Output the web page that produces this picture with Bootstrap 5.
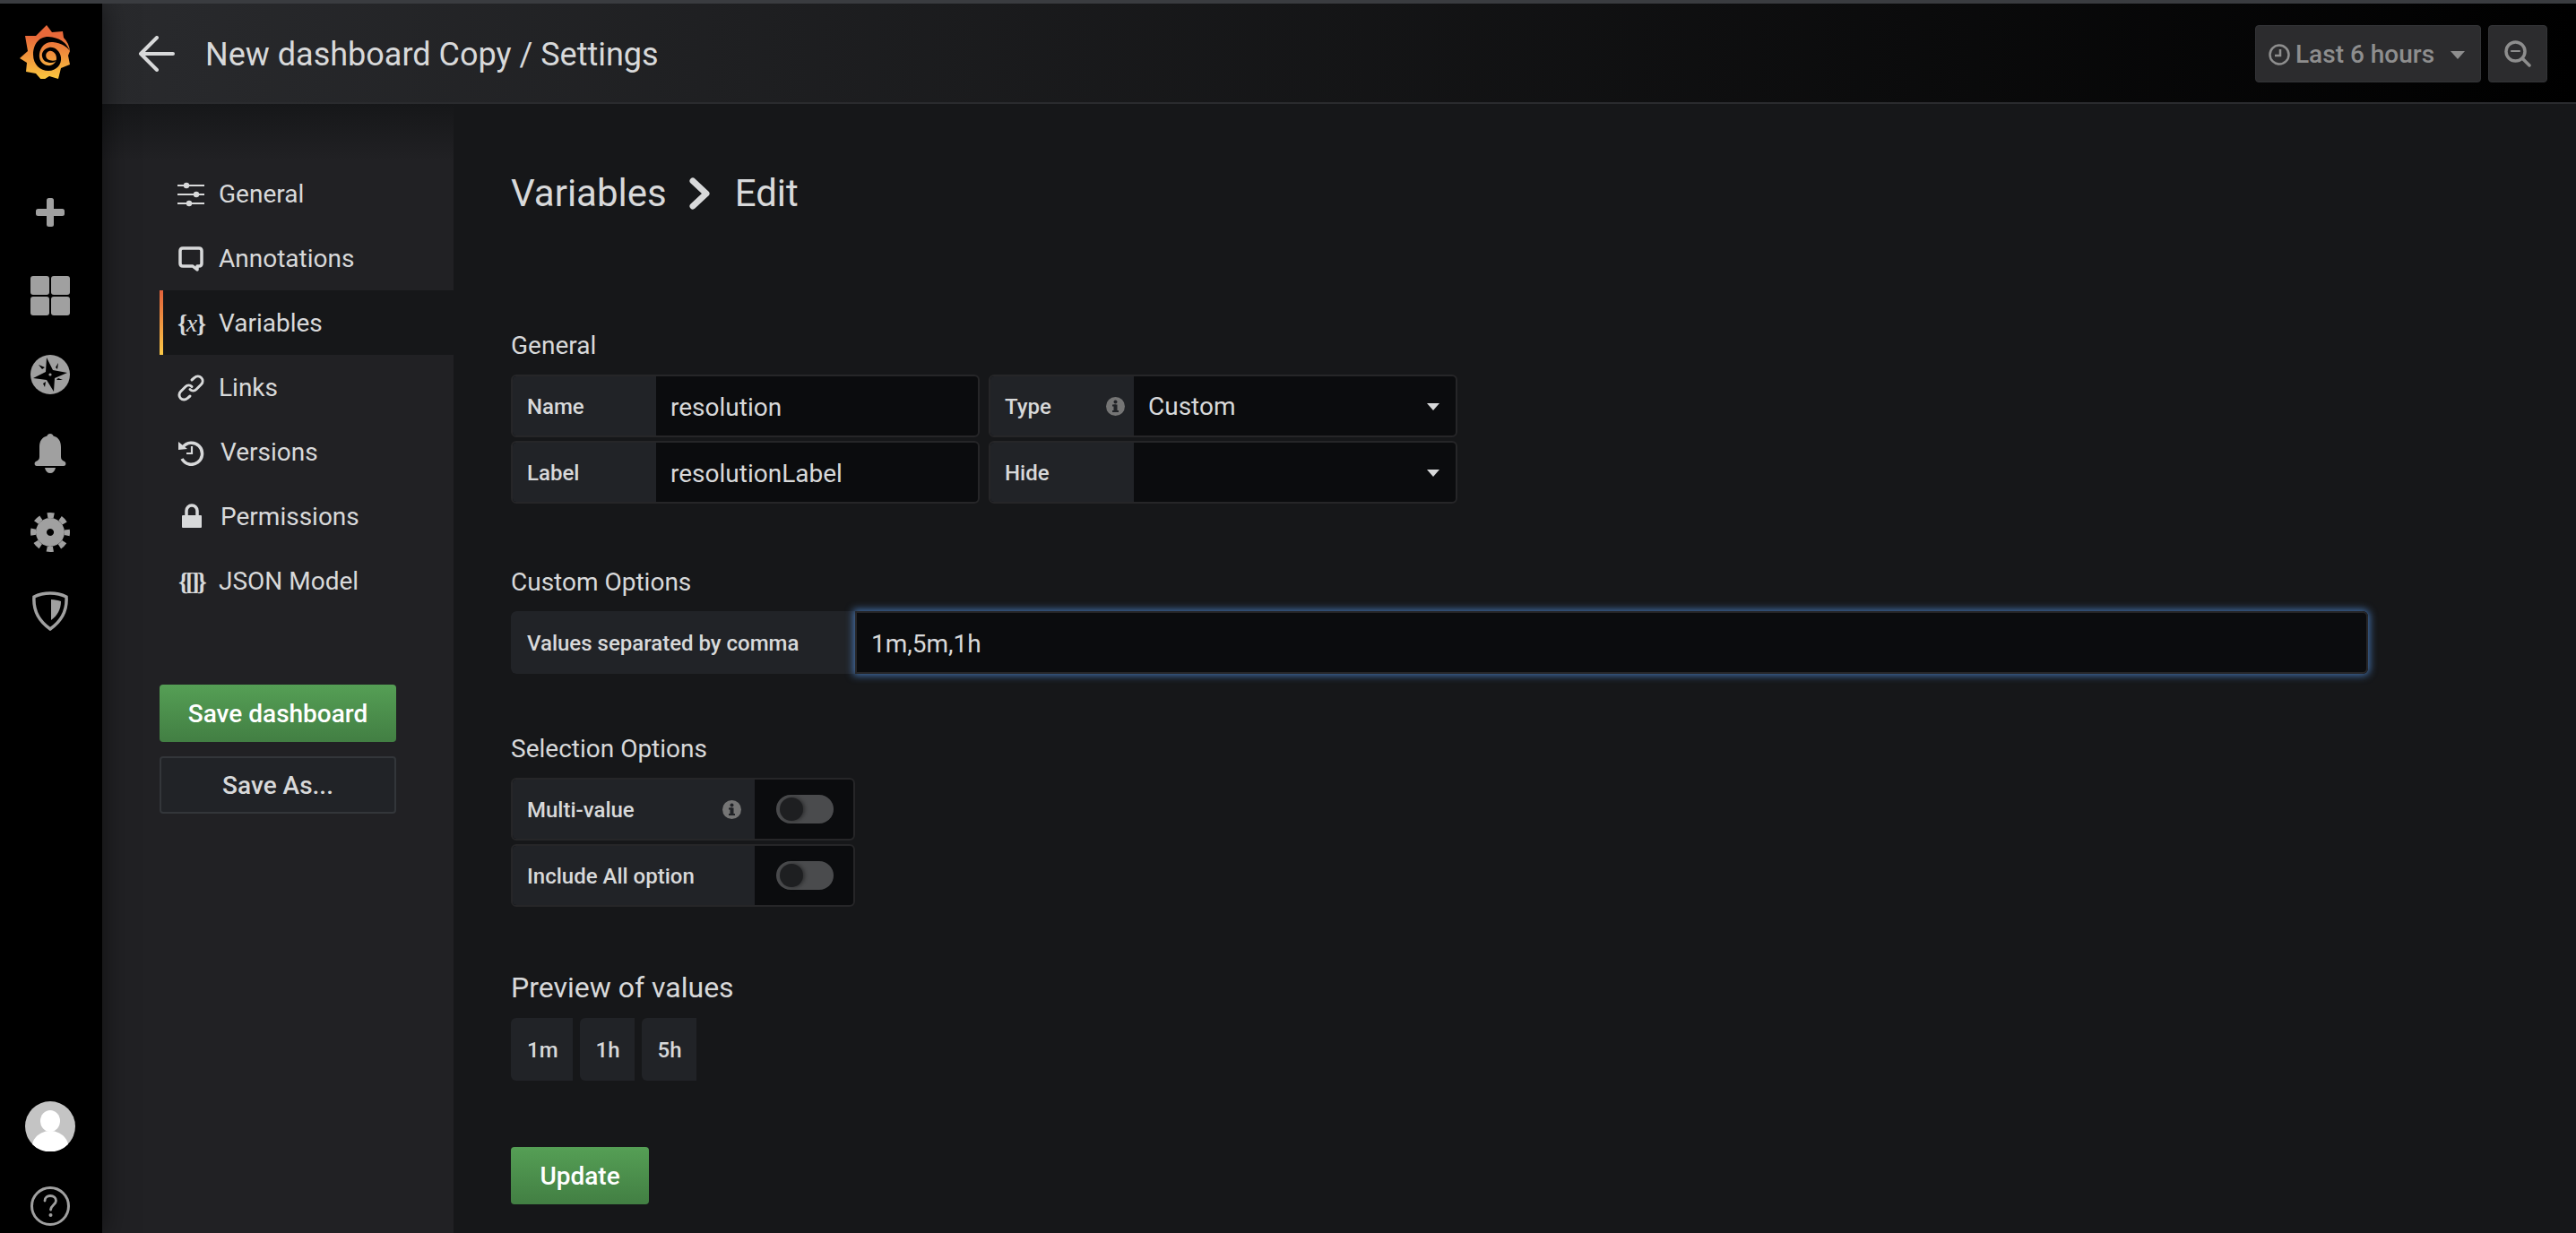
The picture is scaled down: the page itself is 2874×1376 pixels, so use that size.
<!DOCTYPE html>
<html lang="en">

<head>
    <meta charset="UTF-8">
    <meta name="viewport" content="width=device-width, initial-scale=1.0">
    <title>New dashboard Copy / Settings</title>
    <link href="https://cdn.jsdelivr.net/npm/bootstrap@5.3.0/dist/css/bootstrap.min.css" rel="stylesheet">
    <style>
        body {
            background: #161719;
            color: #d8d9da;
            font-family: Roboto, "Liberation Sans", sans-serif;
            font-size: 28px;
            height: 100vh;
            overflow: hidden;
            border-top: 4px solid #3a3c40;
        }

        .gf-shell {
            height: 100%;
        }

        /* black icon rail on the left */
        .gf-rail {
            width: 114px;
            background: #000;
            position: relative;
            z-index: 2;
            box-shadow: 0 0 30px rgba(0, 0, 0, .55);
            padding: 0 2px 8px 0;
        }

        .gf-rail svg {
            display: block;
            fill: #a0a0a0;
        }

        .gf-logo {
            width: 64px;
            height: 64px;
            margin: 20px 0 0 18px;
            align-self: flex-start;
        }

        .gf-rail-icons {
            margin-top: 133px;
            gap: 44px;
        }

        .gf-rail-plus {
            margin-bottom: 11px;
        }

        .gf-rail-foot {
            gap: 39px;
        }

        /* top bar */
        .gf-topbar {
            height: 112px;
            flex: none;
            background: linear-gradient(90deg, #292a2d, #000);
            border-bottom: 2px solid #2a2b2e;
            padding: 2px 32px 0 40px;
        }

        .gf-title {
            font-size: 36px;
            color: #d8d9da;
            margin: 3px 0 0 33px;
            font-weight: 400;
        }

        .gf-timebtn {
            height: 64px;
            background: #2c2c2e;
            border: 1px solid #333437;
            border-radius: 4px;
            color: #8e8e8e;
            font-size: 28px;
            font-weight: 500;
        }

        .gf-timepick {
            width: 252px;
            padding: 2px 14px 0;
            margin-right: 8px;
            gap: 6px;
        }

        .gf-zoomout {
            width: 66px;
            justify-content: center;
        }

        .gf-caret-dim {
            width: 0;
            height: 0;
            border-left: 8px solid transparent;
            border-right: 8px solid transparent;
            border-top: 9px solid #8e8e8e;
            margin-left: 12px;
        }

        /* settings aside */
        .gf-aside {
            width: 392px;
            flex: none;
            padding: 64px 0 0 64px;
            background: linear-gradient(180deg, #161719 0, #212124 64px);
        }

        .gf-menu-link {
            height: 72px;
            color: #d8d9da;
            font-size: 28px;
            padding: 2px 0 0 16px;
            border-left: 4px solid transparent;
        }

        .gf-menu-link:hover {
            color: #d8d9da;
        }

        .gf-menu-link.gf-active {
            background: #161719;
            border-image: linear-gradient(#e2603a, #fbca47) 1;
        }

        .gf-mi {
            width: 30px;
            height: 30px;
            flex: none;
            margin-right: 16px;
            display: block;
        }

        .gf-mi-wide {
            margin-right: 18px;
        }

        .gf-mi-text {
            width: 30px;
            flex: none;
            margin-right: 16px;
            font-family: "Liberation Serif", serif;
            font-size: 28px;
            font-weight: 700;
            white-space: nowrap;
            letter-spacing: -1.2px;
        }

        .gf-mi-text i {
            font-weight: 400;
        }

        .gf-mi-json {
            letter-spacing: -3px;
            padding-left: 1px;
        }

        .gf-save {
            width: 264px;
            margin-top: 80px;
            gap: 16px;
        }

        .gf-btn {
            height: 64px;
            border-radius: 4px;
            font-size: 28px;
            font-weight: 500;
            padding: 2px 0 0;
            display: flex;
            align-items: center;
            justify-content: center;
        }

        .gf-btn-green {
            background: linear-gradient(#559f55, #427f43);
            border: 0;
            color: #fff;
        }

        .gf-btn-green:hover {
            color: #fff;
        }

        .gf-btn-dark {
            background: #212327;
            border: 2px solid #33363a;
            color: #d8d9da;
        }

        .gf-btn-dark:hover {
            color: #d8d9da;
        }

        /* form area */
        .gf-content {
            padding: 0 0 0 64px;
            min-width: 0;
        }

        .gf-head {
            height: 64px;
            margin-top: 68px;
            font-size: 42px;
            line-height: 64px;
            gap: 23px;
        }

        .gf-section {
            font-size: 28px;
            line-height: 36px;
            margin: 0 0 14px;
            font-weight: 400;
        }

        .gf-first {
            margin-top: 120px;
        }

        .gf-rows {
            gap: 4px;
        }

        .gf-row {
            height: 70px;
            gap: 10px;
        }

        .gf-field {
            border: 2px solid #262628;
            border-radius: 6px;
            overflow: hidden;
            background: #0b0c0e;
        }

        .gf-label {
            background: #212327;
            font-size: 24px;
            font-weight: 500;
            padding: 1px 10px 0 16px;
            flex: none;
            height: 100%;
        }

        .gf-w-162 {
            width: 160px;
        }

        .gf-input {
            background: transparent;
            border: 0;
            border-radius: 0;
            color: #d8d9da;
            font-size: 28px;
            padding: 2px 16px 0;
            height: 100%;
            flex: 1;
            min-width: 0;
        }

        .gf-input:focus {
            background: transparent;
            color: #d8d9da;
            box-shadow: none;
        }

        .gf-half {
            width: 523px;
        }

        .gf-sel {
            flex: 1;
            height: 100%;
            padding: 2px 18px 0 16px;
        }

        .gf-caret {
            width: 0;
            height: 0;
            border-left: 7px solid transparent;
            border-right: 7px solid transparent;
            border-top: 8px solid #d8d9da;
        }

        .gf-info {
            width: 21px;
            height: 21px;
            display: block;
        }

        .gf-values {
            width: 2072px;
            border-radius: 6px;
            background: #0b0c0e;
        }

        .gf-values .gf-label {
            width: 384px;
            border-radius: 6px 0 0 6px;
            padding-left: 18px;
        }

        .gf-focus {
            flex: 1;
            height: 100%;
            border: 2px solid #262628;
            box-shadow: 0 0 8px 2px rgba(82, 140, 215, .75);
            border-radius: 0 6px 6px 0;
            position: relative;
        }

        .gf-toggle-row {
            width: 384px;
        }

        .gf-toggle-row .gf-label {
            width: 270px;
            padding-right: 15px;
        }

        .gf-switch {
            width: 64px;
            height: 32px;
            border-radius: 16px;
            background: #4a4b4d;
            padding: 3px 4px;
            margin-left: 14px;
        }

        .gf-switch span {
            display: block;
            width: 26px;
            height: 26px;
            border-radius: 50%;
            background: #1e1f21;
            box-shadow: 2px 0 4px rgba(0, 0, 0, .4);
        }

        .gf-chips {
            gap: 8px;
        }

        .gf-chip {
            height: 70px;
            padding: 1px 16px 0 18px;
            background: #212327;
            border-radius: 6px 0 0 6px;
            font-size: 24px;
            font-weight: 500;
        }

        .gf-update {
            width: 154px;
            margin-top: 74px;
        }

        .gf-preview {
            font-size: 32px;
            line-height: 40px;
            font-weight: 400;
            margin: 0 0 14px;
        }
    </style>
</head>

<body>
    <div class="gf-shell d-flex">
        <!-- icon rail -->
        <div class="gf-rail d-flex flex-column align-items-center flex-shrink-0">
            <svg class="gf-logo" viewBox="18 24 64 64">
                <defs>
                    <linearGradient id="sun" x1="0" y1="0" x2="0" y2="1">
                        <stop offset="0.2" stop-color="#e8693a"></stop>
                        <stop offset="1" stop-color="#fbca3f"></stop>
                    </linearGradient>
                </defs>
                <path fill="url(#sun)" d="M52 28 L58 36 L70 35 L71 42 Q77 48 78 57 L76 62 L78 72 L68 76 L65 88 L55 85 L47 90 L40 82 L29 80 L30 70 L22 65 L31 57 L28 40 L40 40 Z"></path>
                <path fill="#000" d="M78 57 Q72 42 54 41 C42 41 37 51 37 61 C37 72 45 79 54 79 C63 79 69 72 68 64 C67 57 61 52 55 53 C50 54 46 58 47 63 C48 68 52 70 57 70 C60 70 62 69 63 67 C60 68 56 68 53 66 C50 63 51 58 55 57 C59 56 63 60 63 65 C63 70 58 74 53 73 C47 72 43 67 44 60 C45 52 51 46 59 47 C68 48 75 52 78 57 Z"></path>
            </svg>
            <div class="gf-rail-icons d-flex flex-column align-items-center">
                <svg class="gf-rail-plus" width="32" height="32" viewBox="0 0 32 32"><rect x="12" width="8" height="32" rx="2.5"></rect><rect y="12" width="32" height="8" rx="2.5"></rect></svg>
                <svg width="44" height="44" viewBox="0 0 44 44"><rect width="21" height="21" rx="3"></rect><rect x="23" width="21" height="21" rx="3"></rect><rect y="23" width="21" height="21" rx="3"></rect><rect x="23" y="23" width="21" height="21" rx="3"></rect></svg>
                <svg width="44" height="44" viewBox="0 0 44 44"><circle cx="22" cy="22" r="22"></circle><path fill="#000" d="M18 3 L25 17 L41 20 L27 26 L26 41 L18 28 L3 26 L17 19 Z"></path><path fill="#000" d="M9 11 L16 14 L13 16 Z M31 9 L30 16 L28 14 Z M14 32 L17 30 L16 36 Z M36 28 L29 28 L31 26 Z"></path><circle cx="22" cy="22" r="1.6"></circle></svg>
                <svg width="36" height="44" viewBox="0 0 36 44"><path d="M18 0 C20 0 21 1 21.500 2.500 C27 4 30 8 30 15 L30 26 C30 29 32 30 34 31 C36 32 36 36 33 36 L3 36 C0 36 0 32 2 31 C4 30 6 29 6 26 L6 15 C6 8 9 4 14.500 2.500 C15 1 16 0 18 0 Z"></path><path d="M12 38 L24 38 C23 42 21 44 18 44 C15 44 13 42 12 38 Z"></path></svg>
                <svg width="44" height="44" viewBox="0 0 44 44"><path fill-rule="evenodd" d="M22 6 A16 16 0 1 1 21.900 6 Z M22 18 A4 4 0 1 0 22.100 18 Z"></path><circle cx="22" cy="22" r="19" fill="none" stroke="#a0a0a0" stroke-width="6" stroke-dasharray="7.400 7.520" stroke-dashoffset="3.700"></circle></svg>
                <svg width="40" height="44" viewBox="0 0 40 44"><path fill="none" stroke="#a0a0a0" stroke-width="3.500" d="M20 2 C26 2 32 3 38 6 C39 20 33 33 20 42 C7 33 1 20 2 6 C8 3 14 2 20 2 Z"></path><path d="M21 9 C25 9 29 10 32 11 C32 20 28 27 21 32 Z"></path></svg>
            </div>
            <div class="gf-rail-foot mt-auto d-flex flex-column align-items-center">
                <svg width="56" height="56" viewBox="0 0 56 56"><circle cx="28" cy="28" r="28" fill="#c4c4c4"></circle><ellipse cx="28" cy="22" rx="11" ry="12" fill="#fff"></ellipse><path fill="#fff" d="M8 48 C10 38 20 33 28 33 C36 33 46 38 48 48 A28 28 0 0 1 8 48 Z"></path></svg>
                <svg width="44" height="44" viewBox="0 0 44 44"><circle cx="22" cy="22" r="20.500" fill="none" stroke="#a0a0a0" stroke-width="3"></circle><path fill="none" stroke="#a0a0a0" stroke-width="2.800" stroke-linecap="round" d="M16 16 C16 12 19 10.500 22 10.500 C26 10.500 28.500 13 28.500 16 C28.500 20 23 21 22.500 26"></path><circle cx="22.500" cy="32" r="2"></circle></svg>
            </div>
        </div>

        <div class="d-flex flex-column flex-grow-1" style="min-width:0">
            <!-- top bar -->
            <div class="gf-topbar d-flex align-items-center">
                <svg width="42" height="40" viewBox="0 0 42 40" fill="none" stroke="#d8d9da" stroke-width="4" stroke-linecap="round" stroke-linejoin="round"><path d="M21 2 L3 20 L21 38 M3 20 L39 20"></path></svg>
                <h1 class="gf-title">New dashboard Copy / Settings</h1>
                <div class="ms-auto d-flex">
                    <div class="gf-timebtn gf-timepick d-flex align-items-center">
                        <svg width="24" height="24" viewBox="0 0 24 24" fill="none" stroke="#8e8e8e" stroke-width="2.500"><circle cx="12" cy="12" r="10.500"></circle><path d="M13 6 L13 13 L7 13"></path></svg>
                        <span>Last 6 hours</span>
                        <span class="gf-caret-dim"></span>
                    </div>
                    <div class="gf-timebtn gf-zoomout d-flex align-items-center">
                        <svg width="30" height="30" viewBox="0 0 30 30" fill="none" stroke="#8e8e8e" stroke-width="3.500" stroke-linecap="round"><circle cx="12.500" cy="12.500" r="10.500"></circle><path d="M20 20 L28 28"></path><path stroke-width="2.200" d="M8 12 L17 12"></path></svg>
                    </div>
                </div>
            </div>

            <div class="d-flex flex-grow-1" style="min-height:0">
                <!-- settings menu -->
                <div class="gf-aside">
                    <nav class="nav flex-column">
                        <a class="nav-link gf-menu-link d-flex align-items-center" href="#">
                            <svg class="gf-mi" viewBox="0 0 30 30" fill="#d8d9da" stroke="#d8d9da" stroke-width="2"><path d="M0 5 L30 5 M0 15 L30 15 M0 25 L30 25"></path><circle cx="10" cy="5" r="3.200" stroke="none"></circle><circle cx="21" cy="15" r="3.200" stroke="none"></circle><circle cx="13" cy="25" r="3.200" stroke="none"></circle></svg>
                            General
                        </a>
                        <a class="nav-link gf-menu-link d-flex align-items-center" href="#">
                            <svg class="gf-mi" viewBox="0 0 30 30" fill="none" stroke="#d8d9da" stroke-width="3.500" stroke-linejoin="round"><path d="M6 3 L24 3 Q27 3 27 6 L27 20 Q27 23 24 23 L22 23 L22 27 L17 23 L6 23 Q3 23 3 20 L3 6 Q3 3 6 3 Z"></path></svg>
                            Annotations
                        </a>
                        <a class="nav-link gf-menu-link gf-active d-flex align-items-center" href="#">
                            <span class="gf-mi-text">{<i>x</i>}</span>
                            Variables
                        </a>
                        <a class="nav-link gf-menu-link d-flex align-items-center" href="#">
                            <svg class="gf-mi" viewBox="0 0 30 30" fill="none" stroke="#d8d9da" stroke-width="3" stroke-linecap="round"><path d="M16 6 L19 3.500 A5 5 0 0 1 26.500 11 L21 16.500 A5 5 0 0 1 14 16.500"></path><path d="M14 24 L11 26.500 A5 5 0 0 1 3.500 19 L9 13.500 A5 5 0 0 1 16 13.500"></path></svg>
                            Links
                        </a>
                        <a class="nav-link gf-menu-link d-flex align-items-center" href="#">
                            <svg class="gf-mi gf-mi-wide" viewBox="0 0 30 30" fill="none" stroke="#d8d9da" stroke-width="3.500"><path d="M6 9 A12 12 0 1 1 5 22"></path><path fill="#d8d9da" stroke="none" d="M1 3 L11 11 L1 12 Z"></path><path stroke-width="2.200" d="M16 8 L16 16 L10 16"></path></svg>
                            Versions
                        </a>
                        <a class="nav-link gf-menu-link d-flex align-items-center" href="#">
                            <svg class="gf-mi gf-mi-wide" viewBox="0 0 30 30"><path fill="#d8d9da" d="M6 13 L26 13 Q27 13 27 14 L27 26 Q27 27 26 27 L6 27 Q5 27 5 26 L5 14 Q5 13 6 13 Z"></path><path fill="none" stroke="#d8d9da" stroke-width="3.500" d="M10 14 L10 8 A6 6 0 0 1 22 8 L22 14"></path></svg>
                            Permissions
                        </a>
                        <a class="nav-link gf-menu-link d-flex align-items-center" href="#">
                            <span class="gf-mi-text gf-mi-json">{[]}</span>
                            JSON Model
                        </a>
                    </nav>
                    <div class="gf-save d-flex flex-column">
                        <button class="btn gf-btn gf-btn-green">Save dashboard</button>
                        <button class="btn gf-btn gf-btn-dark">Save As...</button>
                    </div>
                </div>

                <!-- edit form -->
                <div class="gf-content flex-grow-1">
                    <div class="gf-head d-flex align-items-center">
                        <span>Variables</span>
                        <svg width="30" height="36" viewBox="0 0 30 36" fill="none" stroke="#d8d9da" stroke-width="7" stroke-linecap="round" stroke-linejoin="round"><path d="M6 4 L21 18 L6 32"></path></svg>
                        <span>Edit</span>
                    </div>

                    <h5 class="gf-section gf-first">General</h5>
                    <div class="gf-rows d-flex flex-column">
                        <div class="gf-row d-flex">
                            <div class="gf-field gf-half d-flex align-items-center">
                                <label class="gf-label gf-w-162 d-flex align-items-center">Name</label>
                                <input class="form-control gf-input" type="text" value="resolution">
                            </div>
                            <div class="gf-field gf-half d-flex align-items-center">
                                <label class="gf-label gf-w-162 d-flex align-items-center justify-content-between">Type
                                    <svg class="gf-info" viewBox="0 0 21 21"><circle cx="10.500" cy="10.500" r="10.500" fill="#757575"></circle><rect x="8.500" y="8.500" width="4" height="8" fill="#212327"></rect><rect x="7" y="15" width="7" height="2" fill="#212327"></rect><rect x="7" y="8.500" width="4" height="2" fill="#212327"></rect><circle cx="10.500" cy="5.500" r="2" fill="#212327"></circle></svg>
                                </label>
                                <div class="gf-sel d-flex align-items-center justify-content-between"><span>Custom</span><span class="gf-caret"></span></div>
                            </div>
                        </div>
                        <div class="gf-row d-flex">
                            <div class="gf-field gf-half d-flex align-items-center">
                                <label class="gf-label gf-w-162 d-flex align-items-center">Label</label>
                                <input class="form-control gf-input" type="text" value="resolutionLabel">
                            </div>
                            <div class="gf-field gf-half d-flex align-items-center">
                                <label class="gf-label gf-w-162 d-flex align-items-center">Hide</label>
                                <div class="gf-sel d-flex align-items-center justify-content-end"><span class="gf-caret"></span></div>
                            </div>
                        </div>
                    </div>

                    <h5 class="gf-section" style="margin-top:70px">Custom Options</h5>
                    <div class="gf-values gf-row d-flex" style="gap:0">
                        <label class="gf-label d-flex align-items-center">Values separated by comma</label>
                        <div class="gf-focus d-flex">
                            <input class="form-control gf-input" type="text" value="1m,5m,1h">
                        </div>
                    </div>

                    <h5 class="gf-section" style="margin-top:66px">Selection Options</h5>
                    <div class="gf-rows d-flex flex-column">
                        <div class="gf-field gf-toggle-row gf-row d-flex align-items-center">
                            <label class="gf-label d-flex align-items-center justify-content-between">Multi-value
                                <svg class="gf-info" viewBox="0 0 21 21"><circle cx="10.500" cy="10.500" r="10.500" fill="#757575"></circle><rect x="8.500" y="8.500" width="4" height="8" fill="#212327"></rect><rect x="7" y="15" width="7" height="2" fill="#212327"></rect><rect x="7" y="8.500" width="4" height="2" fill="#212327"></rect><circle cx="10.500" cy="5.500" r="2" fill="#212327"></circle></svg>
                            </label>
                            <div class="gf-switch"><span></span></div>
                        </div>
                        <div class="gf-field gf-toggle-row gf-row d-flex align-items-center">
                            <label class="gf-label d-flex align-items-center">Include All option</label>
                            <div class="gf-switch"><span></span></div>
                        </div>
                    </div>

                    <h5 class="gf-preview" style="margin-top:70px">Preview of values</h5>
                    <div class="gf-chips d-flex">
                        <div class="gf-chip d-flex align-items-center">1m</div>
                        <div class="gf-chip d-flex align-items-center">1h</div>
                        <div class="gf-chip d-flex align-items-center">5h</div>
                    </div>

                    <button class="btn gf-btn gf-btn-green gf-update">Update</button>
                </div>
            </div>
        </div>
    </div>

    <script src="https://cdn.jsdelivr.net/npm/bootstrap@5.3.0/dist/js/bootstrap.bundle.min.js"></script>
</body>

</html>
